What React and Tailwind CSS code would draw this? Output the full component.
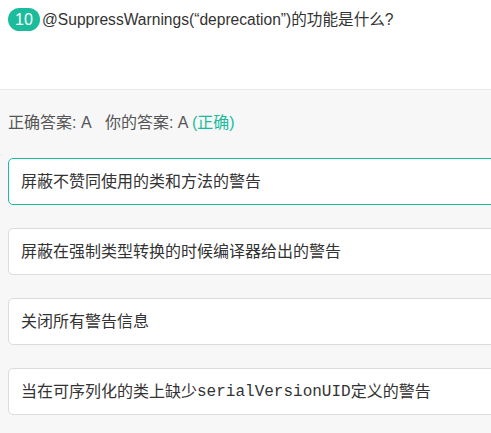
export default function App() {
  const opts = [
    { t: "屏蔽不赞同使用的类和方法的警告", active: true },
    { t: "屏蔽在强制类型转换的时候编译器给出的警告" },
    { t: "关闭所有警告信息" },
    {
      t: (
        <>
          当在可序列化的类上缺少
          <span style={{ fontFamily: '"Liberation Mono", monospace' }} className="text-[16px]">serialVersionUID</span>
          定义的警告
        </>
      ),
    },
  ];
  return (
    <div
      className="w-[491px] h-[433px] overflow-hidden bg-[#f7f7f7] text-[#333]"
      style={{ fontFamily: '"Liberation Sans", "Noto Sans CJK SC", sans-serif' }}
    >
      <div className="h-[90px] bg-white border-b border-[#e8e8e8] pl-2 pt-2">
        <div className="flex items-center gap-[2px]">
          <span className="inline-flex items-center justify-center w-[32px] h-[23px] rounded-full bg-[#1abc9c] text-white text-[16px] leading-none">
            10
          </span>
          <span className="text-[15.6px] leading-[23px]">@SuppressWarnings(“deprecation”)的功能是什么?</span>
        </div>
      </div>
      <div className="pl-2 pt-[22px]">
        <div className="text-[16px] leading-[22px] text-[#555]">
          正确答案: A&nbsp;&nbsp;&nbsp;你的答案: A <span className="text-[#1abc9c]">(正确)</span>
        </div>
        <div className="flex flex-col gap-[23px] mt-[24px] mr-[-20px]">
          {opts.map((o, i) => (
            <div
              key={i}
              className={
                "h-[47px] rounded-[5px] bg-white flex items-center pl-[12px] text-[16px] border " +
                (o.active ? "border-[#1abc9c]" : "border-[#dcdcdc]")
              }
            >
              {o.t}
            </div>
          ))}
        </div>
      </div>
    </div>
  );
}
